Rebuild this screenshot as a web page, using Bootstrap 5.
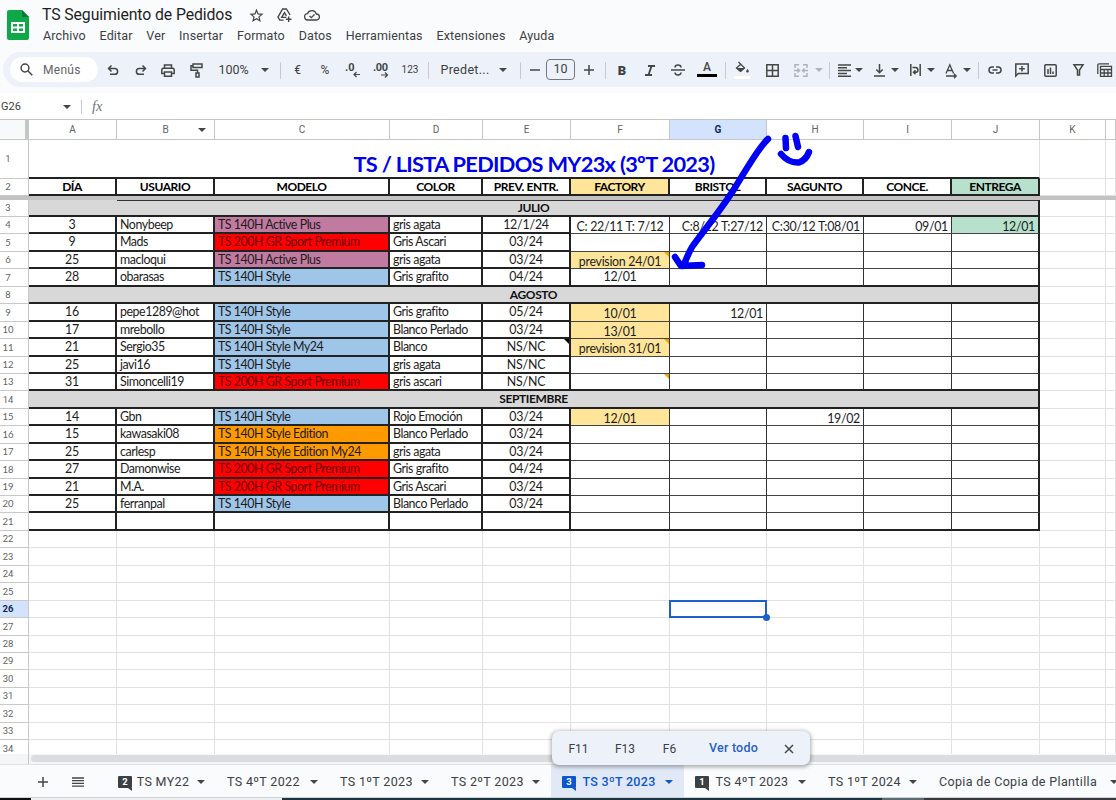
<!DOCTYPE html>
<html lang="es">
<head>
<meta charset="utf-8">
<title>TS Seguimiento de Pedidos</title>
<meta name="viewport" content="width=device-width, initial-scale=1">
<link href="https://cdn.jsdelivr.net/npm/bootstrap@5.3.0/dist/css/bootstrap.min.css" rel="stylesheet">
<style>
body{width:1116px;height:800px;overflow:hidden;background:#f9fbfd;font-family:Roboto,"Liberation Sans",sans-serif;color:#3c4043;font-size:12px;line-height:1}
svg{display:block;flex:none;overflow:visible}
.ic{fill:none;stroke:#444746;stroke-width:1.5}
.caret{width:0;height:0;flex:none;border:4px solid transparent;border-top-color:#444746;border-bottom:0}
.app-head{height:52px;padding:6px 0 0 7px}
.doc-title{font-size:15.8px;line-height:18px;color:#1f1f1f;width:215px;letter-spacing:-.1px}
.menus{gap:13.8px;font-size:12.5px;line-height:16px;padding:4px 0 0 1px;letter-spacing:.13px}
.toolbar{height:35px;margin-left:3px;background:#edf2fa;border-radius:18px 0 0 18px;grid-template-columns:7px 88px 1px 28px 27px 28px 28px 6px 37px 24px 7px 27px 28px 28px 28px 30px 6px 9px 50px 26px 9px 19px 33px 24px 8px 26px 30px 26px 32px 4px 30px 30px 28px 8px 12px 18px 12px 24px 12px 24px 12px 24px 11px 12px 21px 34px 22px 35px 16px}
.toolbar>*{display:flex;align-items:center;justify-content:center;height:35px;padding-top:1px}
.toolbar .pill{height:25px;align-self:center;background:#fff;border-radius:13px;justify-content:flex-start;padding:0 0 0 10px;gap:10px;font-size:12px;color:#5f6368;letter-spacing:.3px}
.toolbar .size-box{width:29px;height:21px;margin-left:2px;padding:0;align-self:center;border:1px solid #747775;border-radius:4px;font-size:12.5px}
.tsep::after{content:"";width:1px;height:17px;background:#c7cbd1}
.fbar{height:26px;margin-top:6px;padding-top:1px;background:#fff;font-size:11px}
.fbar .fx{font:italic 14.5px "Liberation Serif",serif;color:#6f757b}
.sheet{height:635px;background:#fff;border-top:1px solid #c4c7c5;overflow:hidden}
.srow{grid-template-columns:29px 88px 98px 175px 93px 88px 99px 97px 97px 88px 88px 66px 10px;grid-template-rows:100%;height:17.44px}
.srow>*{border-right:1px solid #e1e1e1;border-bottom:1px solid #e1e1e1;white-space:nowrap;min-width:0;min-height:0;position:relative}
.srow>:first-child{border-color:#c9c9c9;font-size:9.5px;color:#5f6368;display:flex;align-items:center;padding-right:12px;justify-content:center}
.srow.heads{height:20px}
.heads>*{display:flex;align-items:center;justify-content:center;font-size:10px;color:#5f6368;border-color:#c4c7c5!important}
.heads>:first-child{border-right:4px solid #bdbdbd;background:#f8f9fa}
.heads .sel,.srow>.sel{background:#d3e3fd;color:#0b2a5c;font-weight:700}
.srow.titles{height:39px}
.titles .big{font:700 21.8px/37px Lato,sans-serif;letter-spacing:-.7px;color:#0000f0;text-align:center;padding-top:5px;border-bottom:2px solid #222}
.wide{grid-column:span 10}
.frz{height:4px;background:#c2c2c2}
.cap,.dat{font-family:Lato,sans-serif;color:#1c1c1c}
.cap>:not(:first-child),.dat>:not(:first-child){font-size:12.4px;line-height:15px;letter-spacing:-.45px}
.cap>:nth-child(n+2):nth-child(-n+11){border-right:2px solid #222;border-bottom:2px solid #222;font-weight:700;text-align:center;font-size:12px;line-height:16px;color:#000}
.dat>:nth-child(n+2):nth-child(-n+6){border-right:2px solid #222;border-bottom:2px solid #222}
.dat>:nth-child(n+7):nth-child(-n+11){border-right:1px solid #333;border-bottom:1px solid #444;line-height:19px;text-align:right;padding-right:3px;letter-spacing:-.3px}
.dat>:nth-child(2),.dat>:nth-child(6){letter-spacing:-.2px}
.dat>:nth-child(11){border-right:2px solid #222!important}
.dat>:nth-child(2),.dat>:nth-child(6),.dat>:nth-child(7){text-align:center!important;padding:0!important}
.dat>:nth-child(3),.dat>:nth-child(4),.dat>:nth-child(5){padding-left:3px}
.last>:nth-child(n+7):nth-child(-n+11){border-bottom:2px solid #222}
.month .wide{background:#d8d8d8;border-right:2px solid #222;border-bottom:2px solid #222;text-align:center;font:700 12px/15px Lato,sans-serif;letter-spacing:-.4px;color:#111}
.pk{background:#c27ba0}.rd{background:#f00;color:#6a0000}.bl{background:#9fc5e8}.og{background:#ff9900}.ye{background:#ffe599}.gn{background:#b7e1cd}
.note::after{content:"";position:absolute;right:0;top:0;border-top:5px solid #f0a500;border-left:5px solid transparent}
.note.blk::after{border-top-color:#000}
.cursor{position:absolute;left:-1px;top:-1px;right:-1px;bottom:-1px;border:2px solid #1a62c9}
.cursor::after{content:"";position:absolute;right:-5px;bottom:-5px;width:7px;height:7px;border-radius:50%;background:#1a62c9}
.scroller{height:11px;background:#f4f5f7;border-bottom:1px solid #dfe1e5}
.scroller div{width:29px;border-right:1px solid #c4c7c5}
.scroller span{height:7px;margin:1px 0 0 2px;background:#dadce0;border-radius:4px 0 0 4px}
.tabs{height:32px;font-size:12.5px;grid-template-columns:24px 37px 33px 13px 109px 113px 111px 111px 133px 133px 111px 201px;letter-spacing:.35px;color:#3c4043}
.tabs>*{display:flex;align-items:center;justify-content:space-between;padding:2px 11px 0;white-space:nowrap}
.tabs>:nth-child(-n+4){padding:2px 0 0;justify-content:center}
.tabs .on{background:#e1e9f7;color:#0b57d0;font-weight:500;letter-spacing:.3px}
.on .caret{border-top-color:#0b57d0}
.cnt{width:14px;height:12px;margin-right:-3px;background:#3c4043;color:#fff;border-radius:1px;font-size:9.5px;font-weight:700;display:flex;align-items:center;justify-content:center;position:relative;letter-spacing:0}
.cnt::after{content:"";position:absolute;right:0;bottom:-3px;border-top:3px solid #3c4043;border-left:4px solid transparent}
.on .cnt{background:#0b57d0}.on .cnt::after{border-top-color:#0b57d0}
.strip{height:4px;grid-template-columns:31px 251px 600px 42px 1fr;border-top:1px solid #cfd2d6}
.pop{position:absolute;left:552px;top:731px;width:258px;height:34px;background:#edf2fa;border-radius:7px;box-shadow:0 1px 4px 1px #0005;grid-template-columns:53px 40px 49px 79px 32px;padding-top:1px;font-size:12px}
.pop>*{display:flex;align-items:center;justify-content:center}
.ink{position:absolute;left:660px;top:120px;fill:none;stroke:#0000f5;stroke-width:6.5;stroke-linecap:round;stroke-linejoin:round}
</style>
</head>
<body class="position-relative">
<header class="app-head d-flex">
  <svg width="22" height="30" viewBox="0 0 22 30" class="mt-1"><path d="M2 0h13l7 7v21a2 2 0 0 1-2 2H2a2 2 0 0 1-2-2V2a2 2 0 0 1 2-2z" fill="#0fa848"/><path d="M15 0l7 7h-7z" fill="#067a35"/><path d="M4 12h14v11H4zM6 14v2.500h4V14zM12 14v2.500h4V14zM6 18.500V21h4v-2.500zM12 18.500V21h4v-2.500z" fill="#fff" fill-rule="evenodd"/></svg>
  <div style="margin-left:13px">
    <div class="d-flex align-items-center">
      <span class="doc-title">TS Seguimiento de Pedidos</span>
      <svg class="ic" width="13" height="13" viewBox="0 0 16 16" style="margin-left:-7px"><path d="M8 1.500l1.900 4.600 4.900.4-3.700 3.200 1.100 4.800L8 12l-4.200 2.500 1.100-4.800L1.200 6.500l4.900-.4z"/></svg>
      <svg class="ic" width="15" height="14" viewBox="0 0 16 15" style="margin-left:14px"><path d="M7 13H3L1 9.700 6 1h4l4 6.500M10 10H5l3-5 2 3.500"/><path d="M12.500 9v6M9.500 12h6"/></svg>
      <svg class="ic" width="16" height="12" viewBox="0 0 16 12" style="margin-left:12px"><path d="M4 11a3.200 3.200 0 0 1-.4-6.400A4.600 4.600 0 0 1 12.300 5 3 3 0 0 1 12.500 11zM5.500 7l1.800 1.700L10.500 5.500" style="stroke-width:1.300"/></svg>
    </div>
    <nav class="menus d-flex"><span>Archivo</span><span>Editar</span><span>Ver</span><span>Insertar</span><span>Formato</span><span>Datos</span><span>Herramientas</span><span>Extensiones</span><span>Ayuda</span></nav>
  </div>
</header>

<div class="toolbar d-grid">
  <i></i>
  <div class="pill"><svg class="ic" width="13" height="13" viewBox="0 0 13 13"><circle cx="5" cy="5" r="3.900"/><path d="M8 8l4.300 4.300"/></svg>Menús</div>
  <i></i>
  <div><svg class="ic" width="12" height="10" viewBox="0 1 12 10"><path d="M4.500 1.500L1.500 4.500l3 3M1.500 4.500h6.200a2.900 2.900 0 0 1 0 5.800H3"/></svg></div>
  <div><svg class="ic" width="12" height="10" viewBox="0 1 12 10"><path d="M7.500 1.500l3 3-3 3M10.500 4.500H4.300a2.900 2.900 0 0 0 0 5.800H9"/></svg></div>
  <div><svg class="ic" width="14" height="13" viewBox="0 0 14 13"><path d="M3.500 4V1h7v3M3.500 9.500H.8V6a1.700 1.700 0 0 1 1.700-1.700h9A1.700 1.700 0 0 1 13.200 6v3.500h-2.700M3.500 8h7v4.200h-7z"/></svg></div>
  <div><svg class="ic" width="13" height="15" viewBox="0 0 13 15"><path d="M3 1h9v3.500H3zM3 2.700H1v4.500h6.500V10M6 10h3v4H6z"/></svg></div>
  <i></i>
  <div style="font-size:12.500px;padding-right:2px">100%</div><div><b class="caret"></b></div><div class="tsep"></div>
  <div>€</div><div>%</div>
  <div><svg width="16" height="14" viewBox="0 0 16 14"><text x="0" y="8" font-size="11" font-weight="700" fill="#444746">.0</text><path class="ic" d="M15 11.500H9.500M11.500 9l-2.500 2.500 2.500 2.500" style="stroke-width:1.200"/></svg></div>
  <div><svg width="17" height="14" viewBox="0 0 17 14"><text x="0" y="8" font-size="11" font-weight="700" fill="#444746" textLength="15">.00</text><path class="ic" d="M8 12h6M12 9.500l2.500 2.500-2.500 2.500" style="stroke-width:1.200"/></svg></div>
  <div style="font-size:10px">123</div><div class="tsep"></div><i></i>
  <div style="font-size:12.500px;letter-spacing:.3px">Predet...</div><div><b class="caret"></b></div><div class="tsep"></div>
  <div><svg class="ic" width="10" height="10" viewBox="0 0 10 10"><path d="M0 5h10"/></svg></div>
  <div class="size-box">10</div>
  <div><svg class="ic" width="10" height="10" viewBox="0 0 10 10"><path d="M0 5h10M5 0v10"/></svg></div><div class="tsep"></div>
  <div style="font-size:13px;font-weight:900">B</div>
  <div><svg class="ic" width="10" height="11" viewBox="0 0 10 11" style="stroke-width:1.900"><path d="M3 1h7M0 10h7M6.500 1l-3 9"/></svg></div>
  <div><svg class="ic" width="14" height="12" viewBox="0 0 14 12"><path d="M0 6h14M10 3.500C10 .3 4 .3 4 3.500M4 8.500c0 3.200 6 3.200 6 0"/></svg></div>
  <div><svg width="20" height="16" viewBox="0 0 20 16"><text x="10" y="9" text-anchor="middle" font-size="12" font-weight="500" fill="#444746">A</text><path d="M0 12h20v3H0z" fill="#000"/></svg></div><div class="tsep"></div>
  <div><svg width="16" height="17" viewBox="0 0 16 17"><path class="ic" d="M4.500 0l6 6-4 3.500-4-3.500L6.800 2.300" style="stroke-width:1.300"/><path d="M2 6h9l-4.500 4zM13.500 7c2 2.500 1.500 3.500 0 3.500s-2-1 0-3.500z" fill="#444746"/><path d="M0 14h16v3H0z" fill="#fff"/></svg></div>
  <div><svg class="ic" width="13" height="13" viewBox="0 0 13 13"><path d="M.8.8h11.400v11.400H.8zM6.500.8v11.400M.8 6.500h11.400"/></svg></div>
  <div><svg class="ic" width="14" height="13" viewBox="0 0 14 13" style="stroke:#b0b4b9"><path d="M5 .8H1V4M9 .8h4V4M1 9v3.200h4M13 9v3.200H9M0 6.500h5M3.500 4.500l2 2-2 2M14 6.500H9M10.500 4.500l-2 2 2 2"/></svg></div>
  <div><b class="caret" style="border-top-color:#b0b4b9"></b></div><div class="tsep"></div>
  <div><svg class="ic" width="13" height="13" viewBox="0 0 13 13"><path d="M0 1h13M0 3.800h9M0 6.600h13M0 9.400h9M0 12.200h13"/></svg></div><div><b class="caret"></b></div>
  <div class="ps-1"><svg class="ic" width="11" height="13" viewBox="0 0 11 13"><path d="M5.500 0v8.500M2.300 5.500l3.200 3.200 3.200-3.200M0 12h11"/></svg></div><div><b class="caret"></b></div>
  <div class="ps-1"><svg class="ic" width="11" height="12" viewBox="0 0 11 12"><path d="M.8 0v12M10.200 0v12M2.500 3.500h3a2.200 2.200 0 0 1 0 4.800H3.500M5.500 6.300l-2 2 2 2"/></svg></div><div><b class="caret"></b></div>
  <div class="ps-1"><svg class="ic" width="12" height="13" viewBox="0 0 12 13"><path d="M1 9.500L4.800.8l3.800 8.700M2.300 6.500h5M1 12h10M9 9.800l2.200 2.200L9 14.200" style="stroke-width:1.300"/></svg></div><div><b class="caret"></b></div><div class="tsep"></div>
  <div><svg class="ic" width="14" height="8" viewBox="0 0 14 8"><path d="M6 1H4a3 3 0 0 0 0 6h2M8 1h2a3 3 0 0 1 0 6H8M4.500 4h5"/></svg></div>
  <div><svg class="ic" width="14" height="14" viewBox="0 0 14 14"><path d="M.8 13V1h12.400v9.500H3.300zM7 3v5.500M4.200 5.800h5.600"/></svg></div>
  <div><svg class="ic" width="13" height="13" viewBox="0 0 13 13"><rect x=".8" y=".8" width="11.400" height="11.400" rx="1"/><path d="M4 5v5M6.500 3.500V10M9 7.500V10"/></svg></div>
  <div><svg class="ic" width="11" height="12" viewBox="0 0 11 12"><path d="M1 .8h9L6.500 6v5h-2V6z"/></svg></div>
  <div><svg class="ic" width="15" height="14" viewBox="0 0 15 14" style="stroke-width:1.300"><path d="M.8 11V2A1.200 1.200 0 0 1 2 .8h10M3.500 3.300h11v10h-11zM3.500 6.500h11M3.500 10h11M7.200 6.500v6.800M10.900 6.500v6.800"/></svg></div>
</div>

<div class="fbar d-flex align-items-center"><span style="width:63px;padding-left:1px">G26</span><b class="caret"></b><span style="width:1px;height:14px;background:#c7cbd1;margin:0 10px 0 10px"></span><span class="fx">fx</span></div>

<main class="sheet">
  <div class="srow heads d-grid"><div></div><div>A</div><div>B<b class="caret position-absolute" style="right:8px"></b></div><div>C</div><div>D</div><div>E</div><div>F</div><div class="sel">G</div><div>H</div><div>I</div><div>J</div><div>K</div><div></div></div>
  <div class="srow titles d-grid"><div>1</div><div class="wide big">TS / LISTA PEDIDOS MY23x (3ºT 2023)</div><div></div><div></div></div>
  <div class="srow cap d-grid" style="height:17px"><div>2</div><div>DÍA</div><div>USUARIO</div><div>MODELO</div><div>COLOR</div><div>PREV. ENTR.</div><div class="ye">FACTORY</div><div>BRISTOL</div><div>SAGUNTO</div><div>CONCE.</div><div class="gn">ENTREGA</div><div></div><div></div></div>
  <div class="frz"></div>
  <div class="srow month d-grid" style="height:17px"><div>3</div><div class="wide" style="background:linear-gradient(#333,#333) 88px 0/100% 1px no-repeat #d8d8d8">JULIO</div><div></div><div></div></div>
  <div class="srow dat d-grid"><div>4</div><div>3</div><div>Nonybeep</div><div class="pk">TS 140H Active Plus</div><div>gris agata</div><div>12/1/24</div><div>C: 22/11 T: 7/12</div><div>C:8/12 T:27/12</div><div>C:30/12 T:08/01</div><div>09/01</div><div class="gn">12/01</div><div></div><div></div></div>
  <div class="srow dat d-grid"><div>5</div><div>9</div><div>Mads</div><div class="rd">TS 200H GR Sport Premium</div><div>Gris Ascari</div><div>03/24</div><div></div><div></div><div></div><div></div><div></div><div></div><div></div></div>
  <div class="srow dat d-grid"><div>6</div><div>25</div><div>macloqui</div><div class="pk">TS 140H Active Plus</div><div>gris agata</div><div>03/24</div><div class="ye note">prevision 24/01</div><div></div><div></div><div></div><div></div><div></div><div></div></div>
  <div class="srow dat last d-grid"><div>7</div><div>28</div><div>obarasas</div><div class="bl">TS 140H Style</div><div>Gris grafito</div><div>04/24</div><div style="line-height:16px">12/01</div><div></div><div></div><div></div><div></div><div></div><div></div></div>
  <div class="srow month d-grid"><div>8</div><div class="wide">AGOSTO</div><div></div><div></div></div>
  <div class="srow dat d-grid"><div>9</div><div>16</div><div>pepe1289@hot</div><div class="bl">TS 140H Style</div><div>Gris grafito</div><div>05/24</div><div class="ye">10/01</div><div>12/01</div><div></div><div></div><div></div><div></div><div></div></div>
  <div class="srow dat d-grid"><div>10</div><div>17</div><div>mrebollo</div><div class="bl">TS 140H Style</div><div>Blanco Perlado</div><div>03/24</div><div class="ye">13/01</div><div></div><div></div><div></div><div></div><div></div><div></div></div>
  <div class="srow dat d-grid"><div>11</div><div>21</div><div>Sergio35</div><div class="bl">TS 140H Style My24</div><div>Blanco</div><div class="note blk">NS/NC</div><div class="ye note">prevision 31/01</div><div></div><div></div><div></div><div></div><div></div><div></div></div>
  <div class="srow dat d-grid"><div>12</div><div>25</div><div>javi16</div><div class="bl">TS 140H Style</div><div>gris agata</div><div>NS/NC</div><div></div><div></div><div></div><div></div><div></div><div></div><div></div></div>
  <div class="srow dat last d-grid"><div>13</div><div>31</div><div>Simoncelli19</div><div class="rd">TS 200H GR Sport Premium</div><div>gris ascari</div><div>NS/NC</div><div class="note"></div><div></div><div></div><div></div><div></div><div></div><div></div></div>
  <div class="srow month d-grid"><div>14</div><div class="wide">SEPTIEMBRE</div><div></div><div></div></div>
  <div class="srow dat d-grid"><div>15</div><div>14</div><div>Gbn</div><div class="bl">TS 140H Style</div><div>Rojo Emoción</div><div>03/24</div><div class="ye">12/01</div><div></div><div>19/02</div><div></div><div></div><div></div><div></div></div>
  <div class="srow dat d-grid"><div>16</div><div>15</div><div>kawasaki08</div><div class="og">TS 140H Style Edition</div><div>Blanco Perlado</div><div>03/24</div><div></div><div></div><div></div><div></div><div></div><div></div><div></div></div>
  <div class="srow dat d-grid"><div>17</div><div>25</div><div>carlesp</div><div class="og">TS 140H Style Edition My24</div><div>gris agata</div><div>03/24</div><div></div><div></div><div></div><div></div><div></div><div></div><div></div></div>
  <div class="srow dat d-grid"><div>18</div><div>27</div><div>Damonwise</div><div class="rd">TS 200H GR Sport Premium</div><div>Gris grafito</div><div>04/24</div><div></div><div></div><div></div><div></div><div></div><div></div><div></div></div>
  <div class="srow dat d-grid"><div>19</div><div>21</div><div>M.A.</div><div class="rd">TS 200H GR Sport Premium</div><div>Gris Ascari</div><div>03/24</div><div></div><div></div><div></div><div></div><div></div><div></div><div></div></div>
  <div class="srow dat d-grid"><div>20</div><div>25</div><div>ferranpal</div><div class="bl">TS 140H Style</div><div>Blanco Perlado</div><div>03/24</div><div></div><div></div><div></div><div></div><div></div><div></div><div></div></div>
  <div class="srow dat last d-grid"><div>21</div><div></div><div></div><div></div><div></div><div></div><div></div><div></div><div></div><div></div><div></div><div></div><div></div></div>
  <div class="srow d-grid"><div>22</div><div></div><div></div><div></div><div></div><div></div><div></div><div></div><div></div><div></div><div></div><div></div><div></div></div>
  <div class="srow d-grid"><div>23</div><div></div><div></div><div></div><div></div><div></div><div></div><div></div><div></div><div></div><div></div><div></div><div></div></div>
  <div class="srow d-grid"><div>24</div><div></div><div></div><div></div><div></div><div></div><div></div><div></div><div></div><div></div><div></div><div></div><div></div></div>
  <div class="srow d-grid"><div>25</div><div></div><div></div><div></div><div></div><div></div><div></div><div></div><div></div><div></div><div></div><div></div><div></div></div>
  <div class="srow d-grid"><div class="sel">26</div><div></div><div></div><div></div><div></div><div></div><div></div><div class="z-1"><div class="cursor"></div></div><div></div><div></div><div></div><div></div><div></div></div>
  <div class="srow d-grid"><div>27</div><div></div><div></div><div></div><div></div><div></div><div></div><div></div><div></div><div></div><div></div><div></div><div></div></div>
  <div class="srow d-grid"><div>28</div><div></div><div></div><div></div><div></div><div></div><div></div><div></div><div></div><div></div><div></div><div></div><div></div></div>
  <div class="srow d-grid"><div>29</div><div></div><div></div><div></div><div></div><div></div><div></div><div></div><div></div><div></div><div></div><div></div><div></div></div>
  <div class="srow d-grid"><div>30</div><div></div><div></div><div></div><div></div><div></div><div></div><div></div><div></div><div></div><div></div><div></div><div></div></div>
  <div class="srow d-grid"><div>31</div><div></div><div></div><div></div><div></div><div></div><div></div><div></div><div></div><div></div><div></div><div></div><div></div></div>
  <div class="srow d-grid"><div>32</div><div></div><div></div><div></div><div></div><div></div><div></div><div></div><div></div><div></div><div></div><div></div><div></div></div>
  <div class="srow d-grid"><div>33</div><div></div><div></div><div></div><div></div><div></div><div></div><div></div><div></div><div></div><div></div><div></div><div></div></div>
  <div class="srow d-grid"><div>34</div><div></div><div></div><div></div><div></div><div></div><div></div><div></div><div></div><div></div><div></div><div></div><div></div></div>
</main>
<div class="scroller d-flex"><div></div><span class="flex-fill"></span></div>

<footer class="tabs d-grid">
  <i></i>
  <div><svg class="ic" width="10" height="10" viewBox="0 0 10 10"><path d="M0 5h10M5 0v10"/></svg></div>
  <div><svg class="ic" width="12" height="10" viewBox="0 0 12 10" style="stroke-width:1.300"><path d="M0 1h12M0 3.700h12M0 6.400h12M0 9.100h12"/></svg></div>
  <i></i>
  <div><b class="cnt">2</b><span>TS MY22</span><b class="caret"></b></div>
  <div><span>TS 4ºT 2022</span><b class="caret"></b></div>
  <div><span>TS 1ºT 2023</span><b class="caret"></b></div>
  <div><span>TS 2ºT 2023</span><b class="caret"></b></div>
  <div class="on"><b class="cnt">3</b><span>TS 3ºT 2023</span><b class="caret"></b></div>
  <div><b class="cnt">1</b><span>TS 4ºT 2023</span><b class="caret"></b></div>
  <div><span>TS 1ºT 2024</span><b class="caret"></b></div>
  <div><span>Copia de Copia de Plantilla</span><b class="caret"></b></div>
</footer>
<div class="strip d-grid"><i style="background:#111"></i><i style="background:#eef0f2"></i><i style="background:#1d3540"></i><i style="background:#5c6b74"></i><i style="background:#3a3a3c"></i></div>

<div class="pop d-grid"><span>F11</span><span>F13</span><span>F6</span><span style="color:#2a5fc4;font-weight:500;font-size:12.500px;letter-spacing:.2px">Ver todo</span><span><svg class="ic" width="8" height="8" viewBox="0 0 8 8"><path d="M0 0l8 8M8 0L0 8"/></svg></span></div>
<svg class="ink" width="160" height="155" viewBox="660 120 160 155"><path d="M768 139C758 148 746 170 736 186C722 209 704 230 692 247Q687 256 684 265M675 257l6 9 21-1M785.500 138l.5 10M795.500 136l2.500 11M781 154C786 160 792 163 799 162.500Q806 160 809 152"/></svg>
<script src="https://cdn.jsdelivr.net/npm/bootstrap@5.3.0/dist/js/bootstrap.bundle.min.js"></script>
</body>
</html>
